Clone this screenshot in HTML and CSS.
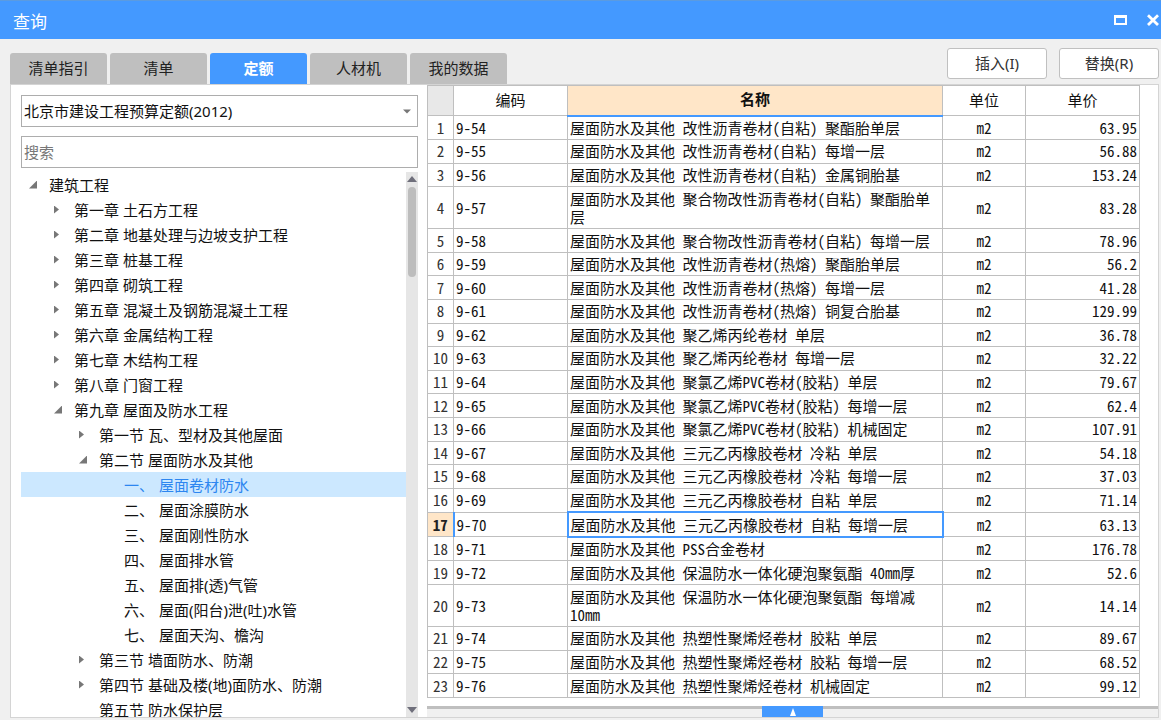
FILE: index.html
```html
<!DOCTYPE html>
<html lang="zh-CN">
<head>
<meta charset="utf-8">
<title>查询</title>
<link rel="stylesheet" href="styles.css">
</head>
<body>
<div class="window">
  <header class="titlebar">
    <h1 class="title">查询</h1>
    <div class="window-controls">
      <button class="control" type="button" aria-label="最大化"><svg width="14" height="12" viewBox="0 0 14 12"><path d="M1 1h13v10H1zM3 4v5h9V4z" fill="#fff" fill-rule="evenodd"/></svg></button>
      <button class="control" type="button" aria-label="关闭"><svg width="14" height="12" viewBox="0 0 14 12"><path d="M2 1.2 12 11M12 1.2 2 11" fill="none" stroke="#fff" stroke-width="2.8"/></svg></button>
    </div>
  </header>
  <div class="toolbar">
    <nav class="tabs">
      <button class="tab" type="button">清单指引</button>
      <button class="tab" type="button">清单</button>
      <button class="tab tab-active" type="button">定额</button>
      <button class="tab" type="button">人材机</button>
      <button class="tab" type="button">我的数据</button>
    </nav>
    <div class="actions">
      <button class="action" type="button">插入(I)</button>
      <button class="action" type="button">替换(R)</button>
    </div>
  </div>
  <main class="content">
    <aside class="side">
      <div class="select-wrap">
        <select class="field" aria-label="定额库"><option>北京市建设工程预算定额(2012)</option></select>
        <svg class="select-arrow" width="8" height="5" viewBox="0 0 8 5"><path d="M0 .5h8L4 4.5z" fill="#777"/></svg>
      </div>
      <input class="field" type="text" placeholder="搜索" aria-label="搜索">
      <div class="tree-area">
        <ul class="tree">
          <li><div class="node"><i class="mark open"></i>建筑工程</div>
            <ul>
              <li><div class="node"><i class="mark shut"></i>第一章 土石方工程</div></li>
              <li><div class="node"><i class="mark shut"></i>第二章 地基处理与边坡支护工程</div></li>
              <li><div class="node"><i class="mark shut"></i>第三章 桩基工程</div></li>
              <li><div class="node"><i class="mark shut"></i>第四章 砌筑工程</div></li>
              <li><div class="node"><i class="mark shut"></i>第五章 混凝土及钢筋混凝土工程</div></li>
              <li><div class="node"><i class="mark shut"></i>第六章 金属结构工程</div></li>
              <li><div class="node"><i class="mark shut"></i>第七章 木结构工程</div></li>
              <li><div class="node"><i class="mark shut"></i>第八章 门窗工程</div></li>
              <li><div class="node"><i class="mark open"></i>第九章 屋面及防水工程</div>
                <ul class="level-section">
                  <li><div class="node"><i class="mark shut"></i>第一节 瓦、型材及其他屋面</div></li>
                  <li><div class="node"><i class="mark open"></i>第二节 屋面防水及其他</div>
                    <ul class="level-item">
                      <li><div class="node node-selected"><i class="mark"></i>一、<span class="item-name">屋面卷材防水</span></div></li>
                      <li><div class="node"><i class="mark"></i>二、<span class="item-name">屋面涂膜防水</span></div></li>
                      <li><div class="node"><i class="mark"></i>三、<span class="item-name">屋面刚性防水</span></div></li>
                      <li><div class="node"><i class="mark"></i>四、<span class="item-name">屋面排水管</span></div></li>
                      <li><div class="node"><i class="mark"></i>五、<span class="item-name">屋面排(透)气管</span></div></li>
                      <li><div class="node"><i class="mark"></i>六、<span class="item-name">屋面(阳台)泄(吐)水管</span></div></li>
                      <li><div class="node"><i class="mark"></i>七、<span class="item-name">屋面天沟、檐沟</span></div></li>
                    </ul>
                  </li>
                  <li><div class="node"><i class="mark shut"></i>第三节 墙面防水、防潮</div></li>
                  <li><div class="node"><i class="mark shut"></i>第四节 基础及楼(地)面防水、防潮</div></li>
                  <li><div class="node"><i class="mark"></i>第五节 防水保护层</div></li>
                </ul>
              </li>
            </ul>
          </li>
        </ul>
        <div class="scrollbar">
          <svg width="10" height="6" viewBox="0 0 10 6"><path d="M0 6h10L5 0z" fill="#6f6f7b"/></svg>
          <div class="thumb"></div>
          <svg width="10" height="6" viewBox="0 0 10 6"><path d="M0 0h10L5 6z" fill="#6f6f7b"/></svg>
        </div>
      </div>
    </aside>
    <section class="result">
      <div class="table-area">
        <table class="grid">
          <colgroup><col class="col-index"><col class="col-code"><col><col class="col-unit"><col class="col-price"></colgroup>
          <thead>
            <tr><th class="corner"></th><th>编码</th><th class="sorted">名称</th><th>单位</th><th>单价</th></tr>
          </thead>
          <tbody>
            <tr><th>1</th><td>9-54</td><td>屋面防水及其他 改性沥青卷材(自粘) 聚酯胎单层</td><td>m2</td><td>63.95</td></tr>
            <tr><th>2</th><td>9-55</td><td>屋面防水及其他 改性沥青卷材(自粘) 每增一层</td><td>m2</td><td>56.88</td></tr>
            <tr><th>3</th><td>9-56</td><td>屋面防水及其他 改性沥青卷材(自粘) 金属铜胎基</td><td>m2</td><td>153.24</td></tr>
            <tr><th>4</th><td>9-57</td><td>屋面防水及其他 聚合物改性沥青卷材(自粘) 聚酯胎单层</td><td>m2</td><td>83.28</td></tr>
            <tr><th>5</th><td>9-58</td><td>屋面防水及其他 聚合物改性沥青卷材(自粘) 每增一层</td><td>m2</td><td>78.96</td></tr>
            <tr><th>6</th><td>9-59</td><td>屋面防水及其他 改性沥青卷材(热熔) 聚酯胎单层</td><td>m2</td><td>56.2</td></tr>
            <tr><th>7</th><td>9-60</td><td>屋面防水及其他 改性沥青卷材(热熔) 每增一层</td><td>m2</td><td>41.28</td></tr>
            <tr><th>8</th><td>9-61</td><td>屋面防水及其他 改性沥青卷材(热熔) 铜复合胎基</td><td>m2</td><td>129.99</td></tr>
            <tr><th>9</th><td>9-62</td><td>屋面防水及其他 聚乙烯丙纶卷材 单层</td><td>m2</td><td>36.78</td></tr>
            <tr><th>10</th><td>9-63</td><td>屋面防水及其他 聚乙烯丙纶卷材 每增一层</td><td>m2</td><td>32.22</td></tr>
            <tr><th>11</th><td>9-64</td><td>屋面防水及其他 聚氯乙烯PVC卷材(胶粘) 单层</td><td>m2</td><td>79.67</td></tr>
            <tr><th>12</th><td>9-65</td><td>屋面防水及其他 聚氯乙烯PVC卷材(胶粘) 每增一层</td><td>m2</td><td>62.4</td></tr>
            <tr><th>13</th><td>9-66</td><td>屋面防水及其他 聚氯乙烯PVC卷材(胶粘) 机械固定</td><td>m2</td><td>107.91</td></tr>
            <tr><th>14</th><td>9-67</td><td>屋面防水及其他 三元乙丙橡胶卷材 冷粘 单层</td><td>m2</td><td>54.18</td></tr>
            <tr><th>15</th><td>9-68</td><td>屋面防水及其他 三元乙丙橡胶卷材 冷粘 每增一层</td><td>m2</td><td>37.03</td></tr>
            <tr><th>16</th><td>9-69</td><td>屋面防水及其他 三元乙丙橡胶卷材 自粘 单层</td><td>m2</td><td>71.14</td></tr>
            <tr class="current"><th>17</th><td>9-70</td><td class="focused">屋面防水及其他 三元乙丙橡胶卷材 自粘 每增一层</td><td>m2</td><td>63.13</td></tr>
            <tr><th>18</th><td>9-71</td><td>屋面防水及其他 PSS合金卷材</td><td>m2</td><td>176.78</td></tr>
            <tr><th>19</th><td>9-72</td><td>屋面防水及其他 保温防水一体化硬泡聚氨酯 40mm厚</td><td>m2</td><td>52.6</td></tr>
            <tr><th>20</th><td>9-73</td><td>屋面防水及其他 保温防水一体化硬泡聚氨酯 每增减10mm</td><td>m2</td><td>14.14</td></tr>
            <tr><th>21</th><td>9-74</td><td>屋面防水及其他 热塑性聚烯烃卷材 胶粘 单层</td><td>m2</td><td>89.67</td></tr>
            <tr><th>22</th><td>9-75</td><td>屋面防水及其他 热塑性聚烯烃卷材 胶粘 每增一层</td><td>m2</td><td>68.52</td></tr>
            <tr><th>23</th><td>9-76</td><td>屋面防水及其他 热塑性聚烯烃卷材 机械固定</td><td>m2</td><td>99.12</td></tr>
          </tbody>
        </table>
      </div>
      <div class="drawer">
        <button class="drawer-handle" type="button" aria-label="展开"><svg width="8" height="8" viewBox="0 0 8 8"><path d="M1 8h6L4 0z" fill="#fff"/></svg></button>
      </div>
    </section>
  </main>
</div>
</body>
</html>
```
FILE: styles.css
```css
* {
  box-sizing: border-box;
}

body {
  margin: 0;
  background: #f0f0f0;
  color: #111;
  font: 15px/24px "Noto Sans", "Noto Sans CJK SC", sans-serif;
}

button,
input,
select {
  font: inherit;
  color: inherit;
}

.window {
  display: flex;
  flex-direction: column;
  height: 100vh;
  padding-bottom: 2px;
}

.titlebar {
  display: flex;
  flex: none;
  align-items: center;
  justify-content: space-between;
  height: 39px;
  padding-left: 13px;
  border-top: 1px solid #5b9be0;
  background: #4499ff;
  color: #fff;
}

.title {
  margin: 0;
  padding-top: 4px;
  font-size: 17px;
  font-weight: 400;
}

.window-controls {
  display: flex;
  gap: 19px;
  padding-right: 1px;
}

.control {
  display: flex;
  padding: 0;
  border: 0;
  background: none;
}

.toolbar {
  display: flex;
  flex: none;
  align-items: flex-end;
  justify-content: space-between;
  height: 45px;
  padding: 0 2px 0 10px;
}

.tabs {
  display: flex;
  gap: 3px;
}

.tab {
  width: 97px;
  height: 31px;
  padding: 0 0 2px;
  border: 0;
  border-radius: 3px 3px 0 0;
  background: #bfbfbf;
  color: #222;
}

.tab-active {
  background: #4499ff;
  color: #fff;
  font-weight: 700;
}

.actions {
  display: flex;
  gap: 12px;
  padding-bottom: 5px;
}

.action {
  width: 100px;
  height: 31px;
  padding: 0 0 2px;
  border: 1px solid #c0c0c0;
  border-radius: 3px;
  background: #fff;
  color: #333;
}

.content {
  display: flex;
  flex: 1;
  min-height: 0;
  margin: 0 2px 0 10px;
  border: 1px solid #d4d4d4;
  background: #fff;
}

.side {
  display: flex;
  flex: none;
  flex-direction: column;
  gap: 9px;
  width: 416px;
  padding: 10px 9px 0 10px;
}

.select-wrap {
  position: relative;
  display: flex;
}

.field {
  width: 100%;
  height: 32px;
  padding: 0 2px;
  border: 1px solid #adadad;
  border-radius: 0;
  background: #fff;
  appearance: none;
}

.field::placeholder {
  color: #777;
  opacity: 1;
}

.select-arrow {
  position: absolute;
  top: 14px;
  right: 7px;
}

.tree-area {
  display: flex;
  flex: 1;
  min-height: 0;
  margin-top: -5px;
}

.tree {
  flex: 1;
  overflow: hidden;
}

.tree,
.tree ul {
  margin: 0;
  padding: 0;
  list-style: none;
}

.node {
  display: flex;
  align-items: center;
  height: 25px;
  padding-left: 7px;
  white-space: nowrap;
}

.tree ul .node {
  padding-left: 32px;
}

.tree .level-section .node {
  padding-left: 57px;
}

.tree .level-item .node {
  padding-left: 82px;
}

.node-selected {
  background: #cce8ff;
  color: #2d86f0;
}

.item-name {
  margin-left: 5px;
}

.mark {
  flex: none;
  width: 21px;
  height: 8px;
}

.open::before,
.shut::before {
  display: block;
  background: #777;
  content: "";
}

.open::before {
  width: 8px;
  height: 8px;
  margin-left: 1px;
  clip-path: polygon(100% 0, 100% 100%, 0 100%);
}

.shut::before {
  width: 5px;
  height: 8px;
  margin-left: 1px;
  clip-path: polygon(0 0, 100% 50%, 0 100%);
}

.scrollbar {
  display: flex;
  flex-direction: column;
  flex: none;
  align-items: center;
  width: 12px;
  padding: 4px 0;
  background: #e6e6e6;
}

.thumb {
  width: 8px;
  height: 90px;
  margin: 5px 0 auto;
  border-radius: 4px;
  background: #bdbdbd;
}

.result {
  display: flex;
  flex: 1;
  flex-direction: column;
  min-width: 0;
}

.table-area {
  flex: 1;
  min-height: 0;
  padding: 0 18px 8px 0;
}

.grid {
  width: 100%;
  height: 100%;
  table-layout: fixed;
  border-collapse: collapse;
  font-family: "Noto Sans Mono CJK SC", "Noto Sans CJK SC", monospace;
  line-height: 18px;
}

.col-index {
  width: 26px;
}

.col-code {
  width: 114px;
}

.col-unit {
  width: 83px;
}

.col-price {
  width: 114px;
}

.grid th,
.grid td {
  height: 23px;
  padding: 2px;
  border: 1px solid #bfbfbf;
  font-weight: 400;
  text-align: left;
}

.grid thead th {
  height: 30px;
  padding-bottom: 4px;
  text-align: center;
}

.grid .corner {
  background: #e8e8e8;
}

.grid thead .sorted {
  border-bottom: 2px solid #4499ff;
  background: #ffe6c8;
  font-weight: 700;
}

.grid tbody th {
  padding: 0;
  color: #333;
  text-align: center;
}

.grid td:nth-child(4) {
  text-align: center;
}

.grid td:nth-child(5) {
  text-align: right;
}

.grid .current th {
  border-right: 2px solid #4499ff;
  background: #ffe6c8;
  color: #222;
  font-weight: 700;
}

.grid .current .focused {
  border: 2px solid #4499ff;
}

.drawer {
  display: flex;
  flex: none;
  justify-content: center;
  height: 11px;
  border-top: 3px solid #bfbfbf;
  background: #f0f0f0;
}

.drawer-handle {
  display: flex;
  align-items: center;
  justify-content: center;
  width: 61px;
  height: 11px;
  margin-top: -3px;
  padding: 0;
  border: 0;
  background: #4499ff;
}
```
